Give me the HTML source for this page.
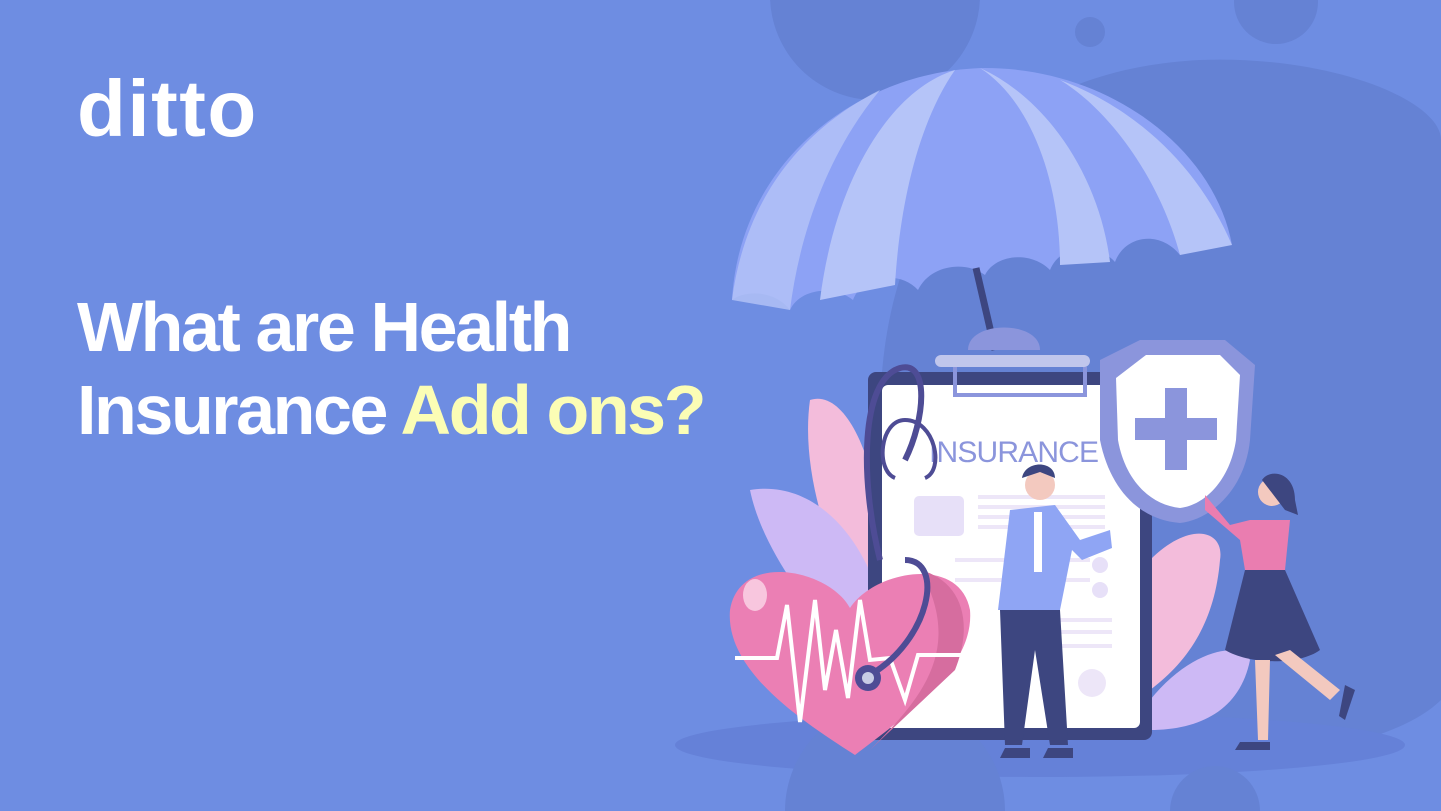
<!DOCTYPE html>
<html><head><meta charset="utf-8"><style>
html,body{margin:0;padding:0;width:1441px;height:811px;overflow:hidden}
body{background:#6E8DE2;position:relative;font-family:"Liberation Sans",sans-serif}
svg{position:absolute;left:0;top:0;display:block}
.logo{position:absolute;left:77px;top:69px;font-size:80px;font-weight:bold;color:#fff;letter-spacing:1.5px;line-height:1}
.t{position:absolute;left:77px;font-size:70px;font-weight:bold;color:#fff;letter-spacing:-2.4px;line-height:1;white-space:nowrap}
.y{color:#FBFDB5}
</style></head><body>
<svg width="1441" height="811" viewBox="0 0 1441 811">
<circle cx="875" cy="-5" r="105" fill="#6582D4"/>
<circle cx="1276" cy="2" r="42" fill="#6582D4"/>
<circle cx="1090" cy="32" r="15" fill="#6582D4"/>
<path d="M880 420 C880 200 1000 70 1200 60 C1330 55 1441 100 1441 140 L1441 700 C1400 740 1300 760 1200 760 L880 760 Z" fill="#6582D4"/>
<ellipse cx="1040" cy="745" rx="365" ry="32" fill="#6581D8"/>
<circle cx="895" cy="811" r="110" fill="#6582D4"/>
<circle cx="1215" cy="811" r="45" fill="#6582D4"/>
<path d="M732 300 C740 160 860 70 985 68 C1110 68 1215 150 1232 245 C1215 232 1190 232 1180 255 C1160 230 1125 235 1115 262 C1095 240 1060 245 1050 270 C1030 250 995 255 985 275 C965 260 930 265 918 290 C900 270 862 275 853 300 C835 285 800 288 790 310 C775 290 745 290 732 300 Z" fill="#8DA2F5"/>
<path d="M820 300 C835 180 890 90 955 70 C920 120 900 200 895 285 Z" fill="#B5C4F8"/>
<path d="M980 68 C1030 100 1060 180 1060 265 L1110 262 C1100 180 1050 100 980 68 Z" fill="#B5C4F8"/>
<path d="M1060 80 C1140 110 1200 170 1232 245 L1180 255 C1160 180 1110 110 1060 80 Z" fill="#B5C4F8"/>
<path d="M732 300 C745 200 800 130 880 90 C830 150 800 230 790 310 Z" fill="#B5C4F8" opacity=".8"/>
<line x1="976" y1="268" x2="995" y2="350" stroke="#3D4680" stroke-width="7"/>
<path d="M810 400 C840 390 870 440 880 520 L860 600 C830 560 800 470 810 400 Z" fill="#F3BCDB"/>
<path d="M750 490 C810 480 860 530 880 600 L840 640 C800 600 760 540 750 490 Z" fill="#CDB9F5"/>
<path d="M1150 560 C1190 520 1225 530 1220 560 C1215 620 1190 660 1150 690 Z" fill="#F3BCDB"/>
<path d="M1150 700 C1190 650 1240 640 1250 660 C1240 710 1200 730 1150 730 Z" fill="#CDB9F5"/>
<rect x="868" y="372" width="284" height="368" rx="8" fill="#3D4680"/>
<rect x="882" y="385" width="258" height="343" rx="6" fill="#fff"/>
<rect x="935" y="355" width="155" height="12" rx="6" fill="#C0C6EC"/>
<path d="M968 350 C968 320 1040 320 1040 350 Z" fill="#8B95DC"/>
<path d="M955 367 L955 395 L1085 395 L1085 367" fill="none" stroke="#8B95DC" stroke-width="4"/>
<text x="929" y="462" font-family="Liberation Sans,sans-serif" font-size="30" fill="#8B95DC" textLength="170">INSURANCE</text>
<rect x="914" y="496" width="50" height="40" rx="5" fill="#E7E0F8"/>
<g stroke="#EDE6F8" stroke-width="4">
<line x1="978" y1="497" x2="1105" y2="497"/><line x1="978" y1="507" x2="1105" y2="507"/><line x1="978" y1="517" x2="1105" y2="517"/><line x1="978" y1="527" x2="1105" y2="527"/>
<line x1="955" y1="560" x2="1090" y2="560"/><line x1="955" y1="580" x2="1090" y2="580"/>
<line x1="1040" y1="620" x2="1112" y2="620"/><line x1="1040" y1="632" x2="1112" y2="632"/><line x1="1040" y1="646" x2="1112" y2="646"/>
</g>
<circle cx="1100" cy="565" r="8" fill="#E7E0F8"/><circle cx="1100" cy="590" r="8" fill="#E7E0F8"/>
<circle cx="1092" cy="683" r="14" fill="#EDE6F8"/>
<path d="M1100 360 L1140 340 L1225 340 L1255 365 L1250 440 C1245 490 1210 520 1180 523 C1140 520 1110 490 1100 440 Z" fill="#8B95DC"/>
<path d="M1116 378 L1146 355 L1220 355 L1240 375 L1236 440 C1230 480 1205 505 1180 508 C1150 505 1125 480 1118 440 Z" fill="#fff"/>
<path d="M1165 388 h22 v30 h30 v22 h-30 v30 h-22 v-30 h-30 v-22 h30 z" fill="#8B95DC"/>
<path d="M880 560 C860 480 860 380 900 368 C930 360 925 420 905 460" fill="none" stroke="#4E4C95" stroke-width="6"/>
<path d="M905 420 C880 420 875 470 895 478 M905 420 C935 420 945 470 925 478" fill="none" stroke="#4E4C95" stroke-width="4"/>
<path d="M850 608 C830 570 740 550 730 610 C725 670 800 720 855 755 C900 720 975 670 970 610 C960 555 875 570 850 608 Z" fill="#EB7FB4"/>
<path d="M920 570 C960 580 975 620 955 670 L870 750 C920 700 965 650 920 570 Z" fill="#D66D9F"/>
<ellipse cx="755" cy="595" rx="12" ry="16" fill="#F8C6DE"/>
<path d="M735 658 L777 658 L787 605 L800 722 L815 600 L825 690 L836 630 L848 698 L860 600 L870 660 L890 658 L905 700 L918 655 L968 655" fill="none" stroke="#fff" stroke-width="4"/>
<path d="M905 560 C945 560 930 640 870 675" fill="none" stroke="#4E4C95" stroke-width="6"/>
<circle cx="868" cy="678" r="13" fill="#4E4C95"/><circle cx="868" cy="678" r="6" fill="#C8CCE6"/>
<path d="M1000 610 L1060 610 L1068 745 L1050 745 L1035 650 L1022 745 L1005 745 Z" fill="#3D4680"/>
<path d="M1010 510 L1055 505 L1080 540 L1110 530 L1112 548 L1082 560 L1072 550 L1060 610 L998 610 Z" fill="#8FA5F4"/>
<rect x="1034" y="512" width="8" height="60" fill="#fff"/>
<circle cx="1040" cy="485" r="15" fill="#F3C9BF"/>
<path d="M1022 478 C1025 460 1055 460 1055 478 L1040 472 Z" fill="#3D4680"/>
<path d="M1005 748 h25 v10 h-30 z M1048 748 h25 v10 h-30 z" fill="#3D4680"/>
<circle cx="1272" cy="492" r="14" fill="#F3C9BF"/>
<path d="M1262 480 C1270 468 1295 472 1295 500 L1298 515 L1285 510 Z" fill="#3D4680"/>
<path d="M1205 495 L1230 525 L1250 520 L1290 520 L1285 570 L1245 570 L1240 540 L1205 510 Z" fill="#EA7DB0"/>
<path d="M1245 570 L1285 570 L1320 650 C1300 665 1250 665 1225 650 Z" fill="#3D4680"/>
<path d="M1255 660 L1270 660 L1268 740 L1258 740 Z M1275 655 L1290 650 L1340 690 L1330 700 Z" fill="#F3C9BF"/>
<path d="M1240 742 h30 v8 h-35 z M1345 685 l10 5 l-10 30 l-6 -4 z" fill="#3D4680"/>
</svg>
<div class="logo">ditto</div>
<div class="t" style="top:292px">What are Health</div>
<div class="t" style="top:375px">Insurance <span class="y">Add ons?</span></div>
</body></html>
